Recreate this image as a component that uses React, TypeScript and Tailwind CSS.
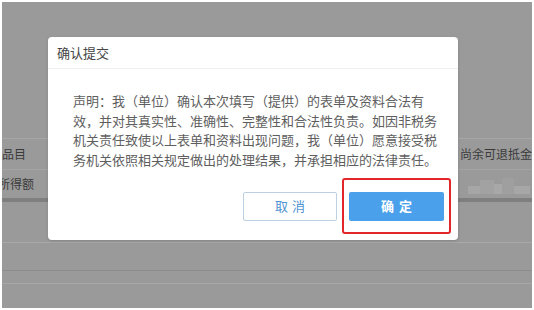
const font = { fontFamily: '"Noto Sans CJK SC", "Liberation Sans", sans-serif' };

export default function App() {
  return (
    <div className="w-[534px] h-[310px] bg-white p-[2px] overflow-hidden" style={font}>
      <div className="relative w-[530px] h-[306px] bg-[#9a9a9a] overflow-hidden">
        {/* background table (dimmed by overlay) */}
        <div className="flex flex-col pt-[136px]">
          <div className="h-px bg-[#a6a6a6]" />
          <div className="flex h-[30px] items-center justify-between text-[12px] text-[#3a3a3a]">
            <span className="whitespace-nowrap">品目</span>
            <span className="w-[72px] whitespace-nowrap overflow-hidden">尚余可退抵金额</span>
          </div>
          <div className="h-px bg-[#a4a4a4]" />
          <div className="flex h-[28px] items-center justify-between text-[12px] text-[#3a3a3a]">
            <span className="whitespace-nowrap -ml-[4px]">所得额</span>
            <div className="flex items-end w-[64px] h-[22px] pb-[1px]">
              <div className="w-[12px] h-[8px] bg-[#a6a6a6]" />
              <div className="w-[14px] h-[14px] bg-[#a2a2a2]" />
              <div className="w-[8px] h-[10px] bg-[#a8a8a8]" />
              <div className="w-[12px] h-[16px] bg-[#9f9f9f]" />
              <div className="w-[16px] h-[8px] bg-[#a7a7a7]" />
            </div>
          </div>
          <div className="h-[4px] bg-[#7f7f7f]" />
          <div className="h-[40px]" />
          <div className="h-px bg-[#a9a9a9]" />
          <div className="h-[27px]" />
          <div className="h-px bg-[#8c8c8c]" />
          <div className="h-[12px]" />
          <div className="h-px bg-[#a8a8a8]" />
        </div>

        {/* confirm dialog */}
        <div className="absolute left-[46px] top-[35px] w-[410px] h-[203px] bg-white rounded-[4px] shadow-[0_1px_3px_rgba(0,0,0,0.15)] flex flex-col">
          <div className="h-[32px] flex items-center px-[9px] border-b border-[#f0f0f0]">
            <span className="text-[13px] text-[#444]">确认提交</span>
          </div>
          <div className="pt-[22px] pl-[25px]">
            <p className="w-[368px] text-[13px] leading-[19.5px] text-[#5e5e5e]">
              声明：我（单位）确认本次填写（提供）的表单及资料合法有效，并对其真实性、准确性、完整性和合法性负责。如因非税务机关责任致使以上表单和资料出现问题，我（单位）愿意接受税务机关依照相关规定做出的处理结果，并承担相应的法律责任。
            </p>
          </div>
          <div className="flex justify-end items-center gap-[5px] pr-[7px] mt-[9px]">
            <button className="w-[94px] h-[29px] bg-white border border-[#bcd0e3] rounded-[2px] text-[13px] text-[#4f93d3] tracking-[4px] pl-[4px]">
              取消
            </button>
            <div className="w-[109px] h-[56px] border-[2px] border-[#e3262a] rounded-[3px] flex items-center justify-center">
              <button className="w-[95px] h-[29px] bg-[#4aa0ea] rounded-[2px] text-[13px] font-bold text-white tracking-[5px] pl-[5px]">
                确定
              </button>
            </div>
          </div>
        </div>
      </div>
    </div>
  );
}
